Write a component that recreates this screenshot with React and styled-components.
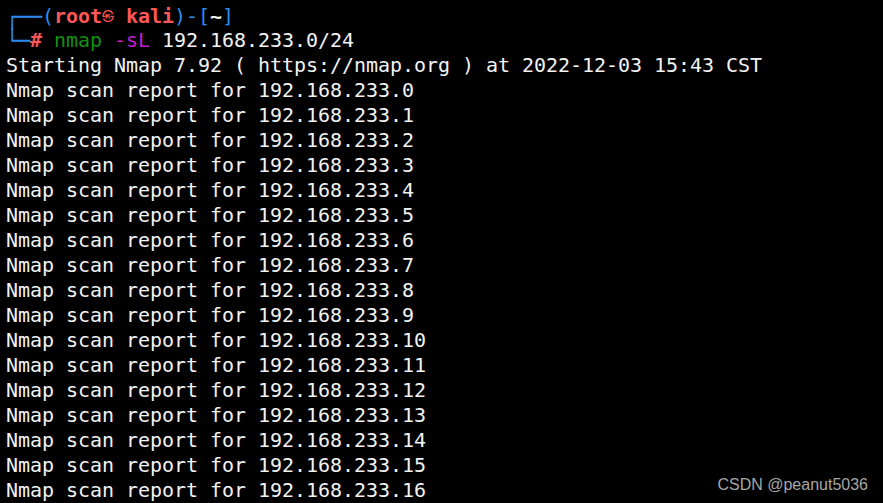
import React from "react";
import styled, { createGlobalStyle } from "styled-components";

const Global = createGlobalStyle`
  html, body { margin: 0; padding: 0; background: #000; }
  #root { height: 503px; }
`;

const Screen = styled.div`
  position: relative;
  width: 883px;
  height: 503px;
  overflow: hidden;
  background: #000;
`;

const Terminal = styled.div`
  display: flex;
  flex-direction: column;
  padding: 3px 0 0 6px;
  font-family: "DejaVu Sans Mono", "Liberation Mono", "Noto Sans CJK SC", monospace;
  font-size: 20px;
  letter-spacing: -0.04px;
  line-height: 25px;
  color: #f2f2f2;
  white-space: pre;
`;

const Line = styled.div`
  height: 25px;
`;

const colors = {
  blue: "#2b8cf0",
  red: "#ff5757",
  green: "#129012",
  magenta: "#c31fd0",
  white: "#f2f2f2",
};

const Seg = styled.span`
  color: ${(p) => colors[p.$c] || colors.white};
  font-weight: ${(p) => (p.$bold ? 700 : 400)};
`;

const BoxChar = styled.span`
  display: inline-block;
  color: ${colors.blue};
  transform: scaleY(1.09);
`;

const Skull = styled.span`
  display: inline-block;
  width: 12px;
  font-size: 12px;
  color: ${colors.red};
  font-family: "Noto Sans CJK KR", "DejaVu Sans", sans-serif;
  vertical-align: 2px;
  text-align: center;
`;

const Watermark = styled.div`
  position: absolute;
  right: 15px;
  bottom: 9px;
  font-family: "Liberation Sans", Arial, sans-serif;
  font-size: 16px;
  line-height: 18px;
  color: #a6a6a6;
`;

const hosts = Array.from({ length: 17 }, (_, i) => `192.168.233.${i}`);

export default function App() {
  return (
    <Screen>
      <Global />
      <Terminal>
        <Line>
          <BoxChar>┌──</BoxChar>
          <Seg $c="blue">(</Seg>
          <Seg $c="red" $bold>root</Seg>
          <Skull>㉿</Skull>
          <Seg $c="red" $bold> kali</Seg>
          <Seg $c="blue">)-[</Seg>
          <Seg $c="white" $bold>~</Seg>
          <Seg $c="blue">]</Seg>
        </Line>
        <Line>
          <BoxChar>└─</BoxChar>
          <Seg $c="red" $bold>#</Seg>
          <Seg> </Seg>
          <Seg $c="green">nmap</Seg>
          <Seg> </Seg>
          <Seg $c="magenta">-sL</Seg>
          <Seg> 192.168.233.0/24</Seg>
        </Line>
        <Line>Starting Nmap 7.92 ( https://nmap.org ) at 2022-12-03 15:43 CST</Line>
        {hosts.map((h) => (
          <Line key={h}>Nmap scan report for {h}</Line>
        ))}
      </Terminal>
      <Watermark>CSDN @peanut5036</Watermark>
    </Screen>
  );
}
